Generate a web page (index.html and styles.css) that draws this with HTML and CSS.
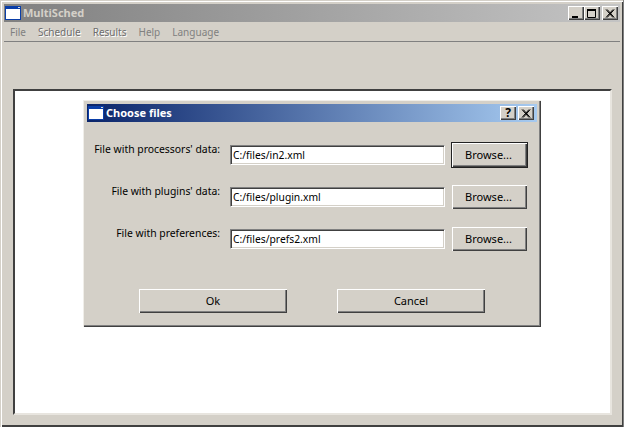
FILE: index.html

```html
<!DOCTYPE html>
<html lang="en">
<head>
<meta charset="utf-8"/>
<title>MultiSched</title>
<meta content="width=device-width, initial-scale=1.0" name="viewport"/>
<link rel="stylesheet" href="styles.css">
</head>
<body>
<div class="window">
  <div class="titlebar titlebar-inactive">
    <svg class="app-icon" width="16" height="14" viewBox="0 0 16 14">
      <rect x="0.5" y="0.5" width="15" height="13" fill="#fff" stroke="#0a3ea8"/>
      <rect x="0" y="0" width="16" height="3" fill="#0a3ea8"/>
      <rect x="13" y="1" width="2" height="1" fill="#d8d8d8"/>
    </svg>
    <span class="title-text">MultiSched</span>
    <div class="caption-buttons">
      <button class="cap-btn">
        <svg width="10" height="9" viewBox="0 0 10 9"><rect x="1" y="7" width="6" height="2" fill="#000"/></svg>
      </button>
      <button class="cap-btn">
        <svg width="10" height="9" viewBox="0 0 10 9"><path d="M0.5 1.5h8v7h-8z" fill="none" stroke="#000"/><rect x="0" y="0" width="9" height="2" fill="#000"/></svg>
      </button>
      <button class="cap-btn cap-close">
        <svg width="10" height="9" viewBox="0 0 10 9"><path d="M1 0.5l7 8M2.2 0.5l7 8M8 0.5l-7 8M9.2 0.5l-7 8" fill="none" stroke="#000"/></svg>
      </button>
    </div>
  </div>
  <div class="menubar">
    <span class="menu-item">File</span>
    <span class="menu-item menu-raised">Schedule</span>
    <span class="menu-item menu-raised">Results</span>
    <span class="menu-item">Help</span>
    <span class="menu-item">Language</span>
  </div>
  <div class="central">
    <div class="panel">
      <div class="dialog">
        <div class="titlebar titlebar-active">
          <svg class="app-icon" width="16" height="14" viewBox="0 0 16 14">
            <rect x="0.5" y="0.5" width="15" height="13" fill="#fff" stroke="#0a3ea8"/>
            <rect x="0" y="0" width="16" height="3" fill="#0a3ea8"/>
            <rect x="13" y="1" width="2" height="1" fill="#d8d8d8"/>
          </svg>
          <span class="title-text">Choose files</span>
          <div class="caption-buttons dialog-caption">
            <button class="cap-btn cap-help">?</button>
            <button class="cap-btn">
              <svg width="10" height="9" viewBox="0 0 10 9"><path d="M1 0.5l7 8M2.2 0.5l7 8M8 0.5l-7 8M9.2 0.5l-7 8" fill="none" stroke="#000"/></svg>
            </button>
          </div>
        </div>
        <div class="dialog-body">
          <div class="file-grid">
            <label class="file-label">File with processors' data:</label>
            <input class="file-input" type="text" value="C:/files/in2.xml"/>
            <button class="btn btn-default">Browse...</button>
            <label class="file-label">File with plugins' data:</label>
            <input class="file-input" type="text" value="C:/files/plugin.xml"/>
            <button class="btn">Browse...</button>
            <label class="file-label">File with preferences:</label>
            <input class="file-input" type="text" value="C:/files/prefs2.xml"/>
            <button class="btn">Browse...</button>
          </div>
          <div class="actions">
            <button class="btn btn-wide">Ok</button>
            <button class="btn btn-wide">Cancel</button>
          </div>
        </div>
      </div>
    </div>
  </div>
</div>
</body>
</html>
```

FILE: styles.css

```css
* { box-sizing: border-box; }
html, body {
  margin: 0;
  padding: 0;
  overflow: hidden;
}
body {
  width: 624px;
  height: 427px;
  background: #d4d0c8;
  font-family: 'Noto Sans', 'Liberation Sans', sans-serif;
  font-size: 10px;
  color: #000;
}

.window {
  width: 624px;
  height: 427px;
  padding: 4px 3px 3px 4px;
  display: flex;
  flex-direction: column;
  background: #d4d0c8;
  border-right: 1px solid #808080;
  box-shadow: inset 1px 1px 0 #d4d0c8, inset 2px 2px 0 #fff, inset -1px -1px 0 #404040, inset 0 -2px 0 #404040;
}

.titlebar {
  height: 18px;
  flex: none;
  display: flex;
  align-items: center;
  padding: 0 2px 0 1px;
}
.titlebar-inactive { background: linear-gradient(to right, #808080, #c4c4c4); color: #d4d0c8; }
.titlebar-active { background: linear-gradient(to right, #0a246a, #a6caf0); color: #fff; }
.app-icon { flex: none; margin: 0 2px 0 0; }
.title-text { font-weight: bold; font-size: 11px; padding-bottom: 2px; }
.caption-buttons {
  margin-left: auto;
  display: flex;
}
.cap-btn {
  width: 16px;
  height: 14px;
  padding: 0;
  display: flex;
  align-items: center;
  justify-content: center;
  background: #d4d0c8;
  border: 0;
  box-shadow: inset 1px 1px 0 #fff, inset -1px -1px 0 #404040, inset -2px -2px 0 #808080;
}
.cap-close { margin-left: 2px; }
.dialog-caption { gap: 2px; margin-right: 1px; }
.cap-help {
  font-family: inherit;
  font-size: 12px;
  font-weight: bold;
  line-height: 14px;
  color: #000;
}

.menubar {
  height: 20px;
  flex: none;
  display: flex;
  align-items: center;
  gap: 12px;
  padding: 1px 0 0 6px;
  border-bottom: 1px solid #808080;
}
.menu-item { color: #808080; }
.menu-raised { color: #6e6e6e; text-shadow: 1px 1px 0 #fff; }

.central {
  flex: 1;
  padding: 47px 8px 9px 9px;
}
.panel {
  position: relative;
  height: 100%;
  background: #fff;
  border: 2px solid;
  border-color: #404040 #e8e5df #e8e5df #404040;
}

.dialog {
  position: absolute;
  left: 68px;
  top: 9px;
  width: 458px;
  height: 227px;
  padding: 4px;
  background: #d4d0c8;
  box-shadow: inset 1px 1px 0 #f0eee9, inset -1px -1px 0 #404040, inset -2px -2px 0 #808080;
}
.dialog-body { padding: 21px 0 0 0; }

.file-grid {
  display: grid;
  grid-template-columns: 136px 215px 75px;
  grid-auto-rows: 24px;
  column-gap: 7px;
  row-gap: 18px;
}
.file-label {
  text-align: right;
  font-size: 10.4px;
  line-height: 12px;
  padding-right: 3px;
}
.file-input {
  margin-top: 2px;
  width: 215px;
  height: 20px;
  padding: 0 2px;
  font-family: inherit;
  font-size: 10.3px;
  background: #fff;
  border: 1px solid;
  border-color: #808080 #fff #fff #808080;
  box-shadow: inset 1px 1px 0 #404040, inset -1px -1px 0 #d4d0c8;
  color: #000;
}
.btn {
  height: 24px;
  padding: 0 2px 2px 0;
  font-family: inherit;
  font-size: 11px;
  background: #d4d0c8;
  color: #000;
  border: 0;
  box-shadow: inset 1px 1px 0 #fff, inset -1px -1px 0 #404040, inset -2px -2px 0 #808080;
}
.btn-default { outline: 1px solid #222; }
.actions {
  display: flex;
  gap: 50px;
  margin: 38px 0 0 52px;
}
.btn-wide { width: 148px; padding-right: 0; }
```
